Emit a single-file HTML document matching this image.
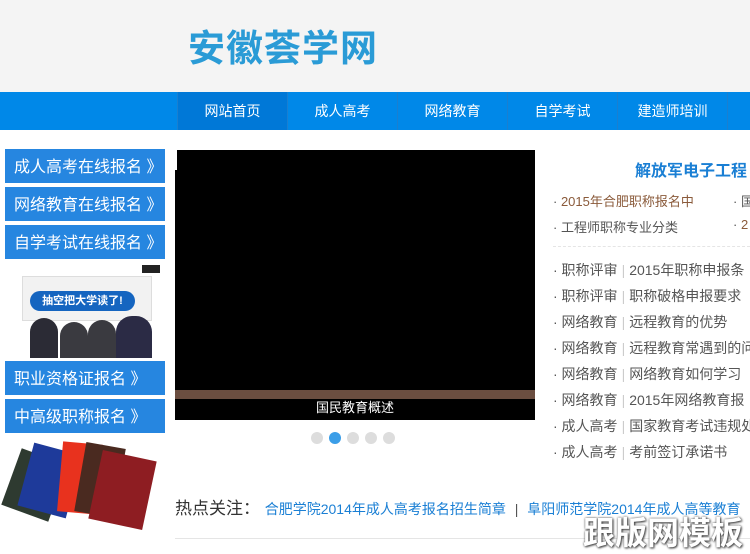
<!DOCTYPE html>
<html><head><meta charset="utf-8"><style>
*{margin:0;padding:0;box-sizing:border-box}
body{width:750px;height:550px;overflow:hidden;position:relative;background:#fff;font-family:"Liberation Sans","Noto Sans CJK SC",sans-serif;}
.hd{position:absolute;left:0;top:0;width:750px;height:92px;background:#f4f4f4}
.logo{position:absolute;left:188px;top:18px;font-size:37px;font-weight:bold;color:#2a9bd6;letter-spacing:1px}
.nav{position:absolute;left:0;top:92px;width:750px;height:38px;background:#0088e8}
.nav div{position:absolute;top:0;height:38px;width:110px;line-height:38px;text-align:center;color:#fff;font-size:14px;border-left:1px solid #1a7fd0}
.sb{position:absolute;left:5px;width:160px;height:34px;background:#2686e0;color:#fff;font-size:16px;line-height:37px;padding-left:9px;white-space:nowrap}
.abs{position:absolute}
.r{position:absolute;left:553px;font-size:14px;color:#555;white-space:nowrap}
.r b{font-weight:normal;color:#ccc;margin:0 4px}
.dot{position:absolute;top:432px;width:12px;height:12px;border-radius:6px;background:#ddd}
</style></head><body>
<div class="hd"><div class="logo">安徽荟学网</div></div>
<div class="nav">
<div style="left:177px;background:#0078d7">网站首页</div>
<div style="left:287px">成人高考</div>
<div style="left:397px">网络教育</div>
<div style="left:507px">自学考试</div>
<div style="left:617px">建造师培训</div>
<div style="left:727px"></div>
</div>
<div class="sb" style="top:149px">成人高考在线报名 》</div>
<div class="sb" style="top:187px">网络教育在线报名 》</div>
<div class="sb" style="top:225px">自学考试在线报名 》</div>
<div class="abs" style="left:22px;top:276px;width:130px;height:45px;background:#f2f2f2;border:1px solid #ddd"></div>
<div class="abs" style="left:142px;top:265px;width:18px;height:8px;background:#222"></div>
<div class="abs" style="left:30px;top:291px;width:105px;height:20px;background:#1565c0;border-radius:10px;color:#fff;font-size:11px;font-weight:bold;line-height:20px;text-align:center">抽空把大学读了!</div>
<div class="abs" style="left:30px;top:318px;width:28px;height:40px;background:#2b2b35;border-radius:14px 14px 0 0"></div>
<div class="abs" style="left:60px;top:322px;width:28px;height:36px;background:#3a3a40;border-radius:14px 14px 0 0"></div>
<div class="abs" style="left:88px;top:320px;width:28px;height:38px;background:#3a3a40;border-radius:14px 14px 0 0"></div>
<div class="abs" style="left:116px;top:316px;width:36px;height:42px;background:#2b2b45;border-radius:16px 16px 0 0"></div>
<div class="sb" style="top:361px">职业资格证报名 》</div>
<div class="sb" style="top:399px">中高级职称报名 》</div>
<div class="abs" style="left:10px;top:455px;width:50px;height:60px;background:#2e3a30;transform:rotate(20deg)"></div>
<div class="abs" style="left:25px;top:448px;width:50px;height:65px;background:#1e3a9a;transform:rotate(15deg)"></div>
<div class="abs" style="left:60px;top:443px;width:40px;height:70px;background:#e8321e;transform:rotate(5deg)"></div>
<div class="abs" style="left:80px;top:445px;width:40px;height:70px;background:#4a2a20;transform:rotate(10deg)"></div>
<div class="abs" style="left:95px;top:455px;width:55px;height:70px;background:#8e1d22;transform:rotate(12deg)"></div>
<div class="abs" style="left:175px;top:150px;width:360px;height:270px;background:#000"></div>
<div class="abs" style="left:173px;top:150px;width:4px;height:20px;background:#fff"></div>
<div class="abs" style="left:175px;top:390px;width:360px;height:9px;background:#6b4e40"></div>
<div class="abs" style="left:175px;top:397px;width:360px;text-align:center;color:#fff;font-size:13px">国民教育概述</div>
<div class="dot" style="left:311px"></div><div class="dot" style="left:329px;background:#3b9ee8"></div><div class="dot" style="left:347px"></div><div class="dot" style="left:365px"></div><div class="dot" style="left:383px"></div>
<div class="abs" style="left:635px;top:157px;font-size:16px;color:#1a7fd4;font-weight:bold;white-space:nowrap">解放军电子工程</div>
<div class="r" style="top:191px;font-size:13px">· <span style="color:#8a5a3a">2015年合肥职称报名中</span></div>
<div class="r" style="left:733px;top:191px;font-size:13px">· 国</div>
<div class="r" style="top:217px;font-size:13px">· 工程师职称专业分类</div>
<div class="r" style="left:733px;top:217px;font-size:13px">· <span style="color:#8a5a3a">2</span></div>
<div class="abs" style="left:553px;top:246px;width:197px;border-top:1px dashed #e5e5e5"></div>
<div class="r" style="top:260px">· 职称评审<b>|</b>2015年职称申报条</div>
<div class="r" style="top:286px">· 职称评审<b>|</b>职称破格申报要求</div>
<div class="r" style="top:312px">· 网络教育<b>|</b>远程教育的优势</div>
<div class="r" style="top:338px">· 网络教育<b>|</b>远程教育常遇到的问</div>
<div class="r" style="top:364px">· 网络教育<b>|</b>网络教育如何学习</div>
<div class="r" style="top:390px">· 网络教育<b>|</b>2015年网络教育报</div>
<div class="r" style="top:416px">· 成人高考<b>|</b>国家教育考试违规处</div>
<div class="r" style="top:442px">· 成人高考<b>|</b>考前签订承诺书</div>
<div class="abs" style="left:175px;top:494px;font-size:17px;color:#333;white-space:nowrap">热点关注： <span style="font-size:14px;color:#1a7fd4">合肥学院2014年成人高考报名招生简章 <span style="color:#555;margin:0 5px">|</span> 阜阳师范学院2014年成人高等教育</span></div>
<div class="abs" style="left:175px;top:538px;width:575px;border-top:1px solid #e5e5e5"></div>
<div class="abs" style="left:583px;top:508px;font-size:32px;font-weight:bold;color:#fff;white-space:nowrap;text-shadow:0 0 2px #555,1px 1px 2px #333">跟版网模板</div>
</body></html>
